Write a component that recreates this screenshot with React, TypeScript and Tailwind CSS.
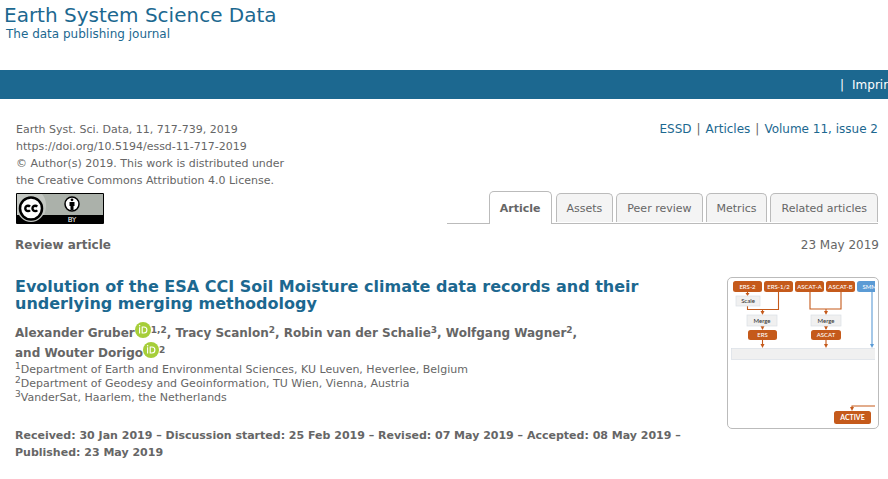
import React from "react";

const tabs = ["Article", "Assets", "Peer review", "Metrics", "Related articles"];

function CcBadge() {
  return (
    <svg width="88" height="31" viewBox="0 0 88 31" role="img" aria-label="Creative Commons Attribution">
      <rect width="88" height="31" rx="1" fill="#000" />
      <rect x="1" y="1" width="86" height="21" fill="#abb1aa" />
      <path d="M1 1h25c5 6 5 14 2 21H1z" fill="#c3c7c2" />
      <circle cx="15" cy="15.5" r="13.6" fill="#c3c7c2" />
      <circle cx="15" cy="15.500" r="11" fill="#fff" stroke="#000" strokeWidth="2.500" />
      <g fill="none" stroke="#000" strokeWidth="2.400">
        <path d="M14 13.600a2.700 2.700 0 1 0 0 3.600" />
        <path d="M21.200 13.600a2.700 2.700 0 1 0 0 3.600" />
      </g>
      <circle cx="56" cy="11" r="7" fill="#fff" stroke="#000" strokeWidth="1.500" />
      <circle cx="56" cy="6.800" r="1.400" />
      <path d="M53.500 9h5v4h-1v4h-3v-4h-1z" />
      <text x="56" y="29" textAnchor="middle" fill="#fff" fontSize="7" fontFamily="DejaVu Sans, sans-serif">
        BY
      </text>
    </svg>
  );
}

function Orcid() {
  return (
    <a href="#orcid" aria-label="ORCID profile" className="-my-1 inline-block h-4 w-4 align-[3px]">
      <svg width="16" height="16" viewBox="0 0 16 16">
        <circle cx="8" cy="8" r="8" fill="#a6ce39" />
        <path d="M4.600 5.200v6.300M7.200 5v6h1.700a3 3 0 0 0 0-6z" fill="none" stroke="#fff" strokeWidth="1.100" />
        <circle cx="4.600" cy="3.700" r=".75" fill="#fff" />
      </svg>
    </a>
  );
}

function Sup({ children }: { children: React.ReactNode }) {
  return <sup className="top-0 align-[4px] text-[9px] leading-[0]">{children}</sup>;
}

type BoxProps = { x: number; y: number; w: number; h: number; label: string; tone?: "orange" | "blue" | "gray"; size?: number; bold?: boolean };

function Box({ x, y, w, h, label, tone = "orange", size = 6, bold = false }: BoxProps) {
  const fill = tone === "orange" ? "#c55a1b" : tone === "blue" ? "#5b9bd5" : "#f0f0f0";
  return (
    <g>
      <rect x={x} y={y} width={w} height={h} rx={tone === "gray" ? 0 : 2.5} fill={fill} stroke={tone === "gray" ? "#d9dfe5" : "none"} strokeWidth=".7" />
      <text x={x + w / 2} y={y + h / 2 + size * 0.36} textAnchor="middle" fontSize={size} fontWeight={bold ? 700 : 500} fill={tone === "gray" ? "#333" : "#fff"} fontFamily="Lato, sans-serif">
        {label}
      </text>
    </g>
  );
}

function Diagram() {
  return (
    <svg width="150" height="150" viewBox="0 0 150 150" role="img" aria-label="Merging scheme of the satellite records">
      <defs>
        <clipPath id="frame">
          <rect x="3" y="3" width="144" height="144" />
        </clipPath>
      </defs>
      <g clipPath="url(#frame)">
        <g fill="none" stroke="#c55a1b" strokeWidth="1.1">
          <path d="M19.500 14v3M19.500 28v3.500h31V14M34.500 31.500v3M34.500 48v3M34.500 62v6" />
          <path d="M82 14v17h31V14M98 31v4M98 48v3M98 62v6M147 128h-23v3" />
        </g>
        <path d="M144 14v53" stroke="#5b9bd5" strokeWidth="1.1" />
        <path d="M142 66h4l-2 4z" fill="#5b9bd5" />
        <g fill="#c55a1b">
          <path d="M17.500 15h4l-2 3zM32.500 33h4l-2 4zM32.500 48h4l-2 4zM32.500 66h4l-2 4z" />
          <path d="M96 33h4l-2 4zM96 48h4l-2 4zM96 66h4l-2 4zM122 129h4l-2 4z" />
        </g>
        <Box x={5} y={3} w={29} h={11} label="ERS-2" />
        <Box x={36} y={3} w={29} h={11} label="ERS-1/2" />
        <Box x={67} y={3} w={29} h={11} label="ASCAT-A" />
        <Box x={98} y={3} w={29} h={11} label="ASCAT-B" />
        <Box x={129} y={3} w={29} h={11} label="SMMR" tone="blue" />
        <Box x={8} y={18} w={24} h={10} label="Scale" tone="gray" />
        <Box x={19} y={37} w={30} h={11} label="Merge" tone="gray" />
        <Box x={83} y={37} w={30} h={11} label="Merge" tone="gray" />
        <Box x={20} y={52} w={29} h={10} label="ERS" />
        <Box x={83} y={52} w={30} h={10} label="ASCAT" />
        <rect x="3.500" y="70.500" width="150" height="11" fill="#f0f0f0" stroke="#d9dfe5" strokeWidth=".7" />
        <Box x={106} y={133} w={37} h={13} label="ACTIVE" size={7} bold />
      </g>
    </svg>
  );
}

export default function App() {
  return (
    <div className="overflow-hidden bg-white font-['DejaVu_Sans','Verdana',sans-serif] text-[11px] leading-[17px] text-[#666]">
      <header className="h-[70px] px-1 pt-1 text-[#1c6890]">
        <h1 className="text-xl leading-[22px]">Earth System Science Data</h1>
        <p className="pl-0.5 text-xs leading-4">The data publishing journal</p>
      </header>
      <nav className="flex h-[29px] items-center justify-end overflow-hidden bg-[#1c6890] text-xs text-white">
        <div className="flex w-12 gap-2 whitespace-nowrap">
          <span>|</span>
          <a href="#imprint">Imprint</a>
        </div>
      </nav>

      <main className="pr-[9px] pl-[15px] pt-[22px]">
        <div className="flex justify-between px-px">
          <div className="whitespace-nowrap">
            <p>Earth Syst. Sci. Data, 11, 717-739, 2019</p>
            <p>https://doi.org/10.5194/essd-11-717-2019</p>
            <p>© Author(s) 2019. This work is distributed under</p>
            <p>the Creative Commons Attribution 4.0 License.</p>
            <a href="#license" className="mt-1 block">
              <CcBadge />
            </a>
          </div>
          <div className="flex flex-col items-end justify-between">
            <nav className="flex gap-[5px] text-xs leading-4 whitespace-nowrap">
              <a href="#essd" className="text-[#1c6890]">ESSD</a>
              <span>|</span>
              <a href="#articles" className="text-[#1c6890]">Articles</a>
              <span>|</span>
              <a href="#issue" className="text-[#1c6890]">Volume 11, issue 2</a>
            </nav>
            <nav className="flex items-end whitespace-nowrap">
              <span className="w-[42px] border-b border-[#bbb]" />
              {tabs.map((tab, i) =>
                i === 0 ? (
                  <React.Fragment key={tab}>
                    <a href="#tab" className="h-[33px] rounded-t-[5px] border border-b-0 border-[#bbb] bg-white px-2.5 pt-2 font-bold">
                      {tab}
                    </a>
                    <span className="w-1 border-b border-[#bbb]" />
                  </React.Fragment>
                ) : (
                  <div key={tab} className={i === 4 ? "border-b border-[#bbb]" : "border-b border-[#bbb] pr-[3px]"}>
                    <a href="#tab" className="mb-px block h-[29px] rounded-t-[5px] border border-b-0 border-[#bbb] bg-[#f4f4f4] px-2.5 pt-1.5">
                      {tab}
                    </a>
                  </div>
                ),
              )}
            </nav>
          </div>
        </div>

        <div className="mt-[13px] flex justify-between text-xs leading-[17px]">
          <span className="font-bold">Review article</span>
          <span>23 May 2019</span>
        </div>

        <div className="mt-[23px] flex items-start justify-between gap-6">
          <article className="min-w-0 pt-px whitespace-nowrap">
            <h2 className="text-base leading-[17px] font-bold text-[#1c6890]">
              Evolution of the ESA CCI Soil Moisture climate data records and their
              <br />
              underlying merging methodology
            </h2>
            <p className="mt-[11px] text-xs leading-5 font-bold">
              Alexander Gruber<Orcid /><Sup>1,2</Sup>, Tracy Scanlon<Sup>2</Sup>, Robin van der Schalie<Sup>3</Sup>, Wolfgang Wagner<Sup>2</Sup>,
              <br />
              and Wouter Dorigo<Orcid /><Sup>2</Sup>
            </p>
            <div className="leading-[14px]">
              <p><Sup>1</Sup>Department of Earth and Environmental Sciences, KU Leuven, Heverlee, Belgium</p>
              <p><Sup>2</Sup>Department of Geodesy and Geoinformation, TU Wien, Vienna, Austria</p>
              <p><Sup>3</Sup>VanderSat, Haarlem, the Netherlands</p>
            </div>
            <p className="mt-[22px] font-bold">
              Received: 30 Jan 2019 – Discussion started: 25 Feb 2019 – Revised: 07 May 2019 – Accepted: 08 May 2019 –
              <br />
              Published: 23 May 2019
            </p>
          </article>
          <a href="#figure" className="block shrink-0 rounded-[5px] border border-[#bbb]">
            <Diagram />
          </a>
        </div>
      </main>
    </div>
  );
}
